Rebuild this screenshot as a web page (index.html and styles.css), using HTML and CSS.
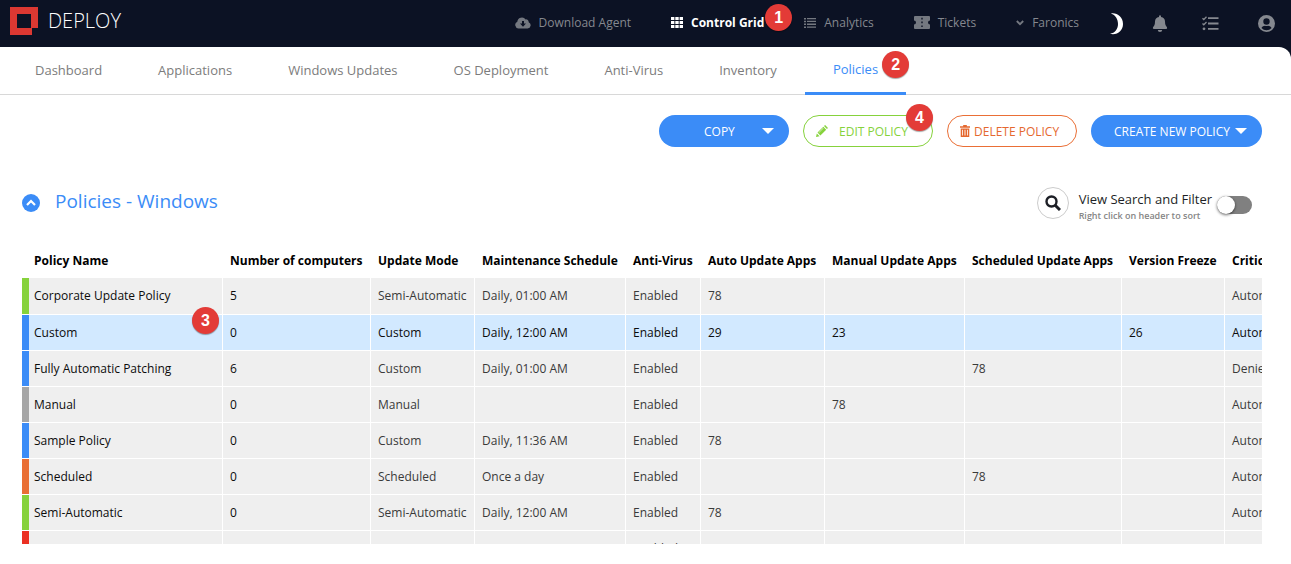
FILE: index.html
```html
<!DOCTYPE html>
<html lang="en">
<head>
<meta charset="utf-8">
<title>Deploy - Policies</title>
<link rel="stylesheet" href="styles.css">
</head>
<body>
<header class="masthead">
  <div class="topbar">
    <a class="brand" href="#">
      <svg class="brand-mark" width="28" height="28" viewBox="0 0 28 28" aria-hidden="true"><path fill="#dc3832" fill-rule="evenodd" d="M0 0H28V21H22V28H0ZM7 7V21H21V7Z"/></svg>
      <span>DEPLOY</span>
    </a>
    <nav class="topnav" aria-label="Main">
      <a class="toplink" href="#">
        <svg width="16" height="12" viewBox="0 0 16 12" aria-hidden="true"><path fill="currentColor" fill-rule="evenodd" d="M3.500 11.500A3.500 3.500 0 0 1 2.300 4.800A4.600 4.600 0 0 1 10.600 2.400A2.700 2.700 0 0 1 13.700 5.200A3.300 3.300 0 0 1 12.600 11.500ZM7 4V6.500H5L8 9.700L11 6.500H9V4Z"/></svg>
        <span>Download Agent</span>
      </a>
      <a class="toplink current" href="#">
        <svg width="12" height="11" viewBox="0 0 12 11" aria-hidden="true"><path fill="currentColor" d="M0 0h3.400v3H0zM4.300 0h3.400v3H4.300zM8.600 0H12v3H8.600zM0 4h3.400v3H0zM4.300 4h3.400v3H4.300zM8.600 4H12v3H8.600zM0 8h3.400v3H0zM4.300 8h3.400v3H4.300zM8.600 8H12v3H8.600z"/></svg>
        <span>Control Grid</span>
        <span class="badge badge-top">1</span>
      </a>
      <a class="toplink" href="#">
        <svg width="12" height="10" viewBox="0 0 12 10" aria-hidden="true"><path fill="currentColor" d="M0 0h2v1.500H0zM3 0h9v1.300H3zM0 2.800h2v1.500H0zM3 2.800h9v1.300H3zM0 5.600h2v1.500H0zM3 5.600h9v1.300H3zM0 8.400h2v1.500H0zM3 8.400h9v1.300H3z"/></svg>
        <span>Analytics</span>
      </a>
      <a class="toplink" href="#">
        <svg width="16" height="13" viewBox="0 0 16 13" aria-hidden="true"><path fill="currentColor" fill-rule="evenodd" d="M1 0H15Q16 0 16 1V4.500A2 2 0 0 0 16 8.500V12Q16 13 15 13H1Q0 13 0 12V8.500A2 2 0 0 0 0 4.500V1Q0 0 1 0ZM7.300 1.800V3.500H8.700V1.800ZM7.300 5.600V7.300H8.700V5.600ZM7.300 9.400V11.100H8.700V9.400Z"/></svg>
        <span>Tickets</span>
      </a>
      <a class="toplink" href="#">
        <svg width="8" height="6" viewBox="0 0 8 6" aria-hidden="true"><path fill="none" stroke="currentColor" stroke-width="1.800" d="M.8 1L4 4.200L7.200 1"/></svg>
        <span>Faronics</span>
      </a>
    </nav>
    <div class="tools">
      <button class="tool moon" type="button" aria-label="Dark mode"><svg width="13" height="22" viewBox="0 0 13 22"><path fill="#fff" d="M1 .5C7 -.5 13 4 13 11S7 22.500 0 20.800C5 20 8 16 8 11S5.500 2 1 .5Z"/></svg></button>
      <button class="tool" type="button" aria-label="Notifications"><svg width="16" height="17" viewBox="0 0 16 17"><path fill="currentColor" d="M7 1.300A1 1 0 0 1 9 1.300V2A4.800 4.800 0 0 1 13 6.600C13 10 14 11.200 15 12.200Q15.600 14 14.200 14H1.800Q.4 14 1 12.200C2 11.200 3 10 3 6.600A4.800 4.800 0 0 1 7 2ZM5.800 15H10.200A2.200 2 0 0 1 5.800 15Z"/></svg></button>
      <button class="tool tasks" type="button" aria-label="Tasks"><svg width="17" height="15" viewBox="0 0 17 15"><path fill="none" stroke="currentColor" stroke-width="1.800" d="M6 2.200H16.500M6 7.500H16.500M6 12.800H16.500"/><path fill="none" stroke="currentColor" stroke-width="1.300" d="M.5 2.200L1.800 3.500L4.500 .7M.5 7.500L1.800 8.800L4.500 6"/><circle cx="2" cy="12.800" r="1.400" fill="currentColor"/></svg></button>
      <button class="tool" type="button" aria-label="Account"><svg width="17" height="17" viewBox="0 0 17 17"><path fill="currentColor" fill-rule="evenodd" d="M8.500 0A8.500 8.500 0 1 1 8.500 17A8.500 8.500 0 1 1 8.500 0ZM8.500 3.300A3.200 3.200 0 1 0 8.500 9.700A3.200 3.200 0 1 0 8.500 3.300ZM3.500 13A6.500 6.500 0 0 0 13.500 13C12.800 11.500 11.300 10.700 10 10.700Q8.500 11.400 7 10.700C5.700 10.700 4.200 11.500 3.500 13Z"/></svg></button>
    </div>
  </div>
  <nav class="tabs" aria-label="Control grid">
    <a class="tab" href="#">Dashboard</a>
    <a class="tab" href="#">Applications</a>
    <a class="tab" href="#">Windows Updates</a>
    <a class="tab" href="#">OS Deployment</a>
    <a class="tab" href="#">Anti-Virus</a>
    <a class="tab" href="#">Inventory</a>
    <a class="tab active" href="#">Policies<span class="badge badge-tab">2</span></a>
  </nav>
</header>
<main class="content">
  <div class="actions">
    <button class="btn solid copy" type="button">COPY <svg class="caret" width="12" height="6" viewBox="0 0 12 6"><path fill="currentColor" d="M0 0H12L6 6Z"/></svg></button>
    <button class="btn edit" type="button">
      <svg width="12" height="12" viewBox="0 0 12 12"><path fill="currentColor" fill-rule="evenodd" d="M0 12L.8 8.400L3.600 11.200ZM1.500 7.600L7.300 1.800L10.200 4.700L4.400 10.500ZM8 1.100L9.100 0L12 2.900L10.900 4ZM3 7.800L7.500 3.300L7.100 2.900L2.600 7.400Z"/></svg>
      EDIT POLICY
      <span class="badge badge-edit">4</span>
    </button>
    <button class="btn delete" type="button">
      <svg width="10" height="12" viewBox="0 0 11 13"><path fill="currentColor" fill-rule="evenodd" d="M3.500 1.300V0H7.500V1.300H11V3H0V1.300ZM.8 3.700H10.200V13H.8ZM2.300 5V11.500H3.200V5ZM5 5V11.500H6V5ZM7.800 5V11.500H8.700V5Z"/></svg>
      DELETE POLICY
    </button>
    <button class="btn solid create" type="button">CREATE NEW POLICY <svg class="caret" width="12" height="6" viewBox="0 0 12 6"><path fill="currentColor" d="M0 0H12L6 6Z"/></svg></button>
  </div>
  <section class="policies">
    <div class="section-head">
      <button class="collapse" type="button" aria-label="Collapse section"><svg width="18" height="18" viewBox="0 0 18 18"><circle cx="9" cy="9" r="9" fill="#3b8cf7"/><path fill="none" stroke="#fff" stroke-width="2.200" d="M5 11L9 7L13 11"/></svg></button>
      <h1 class="title">Policies - Windows</h1>
      <div class="filter">
        <button class="search" type="button" aria-label="Search"><svg width="16" height="16" viewBox="0 0 16 16"><circle cx="6.500" cy="6.500" r="5" fill="none" stroke="#1d1f26" stroke-width="2.400"/><path stroke="#1d1f26" stroke-width="3" d="M10.200 10.200L15 15"/></svg></button>
        <label class="filter-label" for="view-filter">View Search and Filter<small>Right click on header to sort</small></label>
        <input class="switch" id="view-filter" type="checkbox">
      </div>
    </div>
    <div class="grid">
      <table class="table">
        <colgroup><col class="c-name"><col class="c-num"><col class="c-mode"><col class="c-maint"><col class="c-av"><col class="c-auto"><col class="c-man"><col class="c-sched"><col class="c-freeze"><col class="c-crit"></colgroup>
        <thead><tr><th>Policy Name</th><th>Number of computers</th><th>Update Mode</th><th>Maintenance Schedule</th><th>Anti-Virus</th><th>Auto Update Apps</th><th>Manual Update Apps</th><th>Scheduled Update Apps</th><th>Version Freeze</th><th>Critical Updates</th></tr></thead>
        <tbody>
          <tr class="green"><td>Corporate Update Policy</td><td>5</td><td>Semi-Automatic</td><td>Daily, 01:00 AM</td><td>Enabled</td><td>78</td><td></td><td></td><td></td><td>Automatic</td></tr>
          <tr class="blue selected"><td>Custom<span class="badge badge-row">3</span></td><td>0</td><td>Custom</td><td>Daily, 12:00 AM</td><td>Enabled</td><td>29</td><td>23</td><td></td><td>26</td><td>Automatic</td></tr>
          <tr class="blue"><td>Fully Automatic Patching</td><td>6</td><td>Custom</td><td>Daily, 01:00 AM</td><td>Enabled</td><td></td><td></td><td>78</td><td></td><td>Denied</td></tr>
          <tr class="gray"><td>Manual</td><td>0</td><td>Manual</td><td></td><td>Enabled</td><td></td><td>78</td><td></td><td></td><td>Automatic</td></tr>
          <tr class="blue"><td>Sample Policy</td><td>0</td><td>Custom</td><td>Daily, 11:36 AM</td><td>Enabled</td><td>78</td><td></td><td></td><td></td><td>Automatic</td></tr>
          <tr class="orange"><td>Scheduled</td><td>0</td><td>Scheduled</td><td>Once a day</td><td>Enabled</td><td></td><td></td><td>78</td><td></td><td>Automatic</td></tr>
          <tr class="green"><td>Semi-Automatic</td><td>0</td><td>Semi-Automatic</td><td>Daily, 12:00 AM</td><td>Enabled</td><td>78</td><td></td><td></td><td></td><td>Automatic</td></tr>
          <tr class="red"><td></td><td></td><td></td><td></td><td>Enabled</td><td></td><td></td><td></td><td></td><td></td></tr>
        </tbody>
      </table>
    </div>
  </section>
</main>
</body>
</html>
```
FILE: styles.css
```css
* { box-sizing: border-box; }

body {
  margin: 0;
  height: 100vh;
  display: flex;
  flex-direction: column;
  background: #fff;
  color: #1d1f26;
  font-family: "Open Sans", "Noto Sans", sans-serif;
  font-size: 12px;
}

a { color: inherit; text-decoration: none; }
button { font: inherit; border: 0; background: none; padding: 0; cursor: pointer; }
svg { display: block; flex: none; }

/* Header */
.masthead { background: #0c1224; }
.topbar { display: flex; align-items: center; height: 47px; padding: 0 16px 0 10px; }
.brand { display: flex; align-items: center; gap: 10px; color: #fff; font-size: 20px; font-weight: 300; line-height: 28px; padding-bottom: 6px; }
.topnav { display: flex; gap: 40px; margin-left: auto; padding-bottom: 2px; }
.toplink { position: relative; display: flex; align-items: center; gap: 8px; color: #85888f; line-height: 18px; white-space: nowrap; }
.toplink.current { color: #fff; font-weight: 700; }
.toplink svg { color: #747880; }
.toplink.current svg { color: #fff; }
.tools { display: flex; align-items: center; gap: 34px; margin-left: 31px; color: #85888f; }
.tool { color: inherit; }
.tool.moon { margin-right: -5px; }
.tool.tasks { margin-right: 5px; }

/* Tabs */
.tabs {
  display: flex;
  padding-left: 7px;
  background: #fff;
  border-bottom: 1px solid #d8d8d8;
  border-radius: 0 12px 0 0;
}
.tab { position: relative; padding: 0 28px; font-size: 13px; line-height: 47px; color: #7c7c7c; white-space: nowrap; }
.tab.active { color: #3b8cf7; border-bottom: 3px solid #3b8cf7; line-height: 45px; margin-bottom: -1px; }

/* Numbered markers */
.badge {
  position: absolute;
  width: 27px;
  height: 27px;
  border-radius: 50%;
  background: #e33b37;
  box-shadow: 0 1px 1px rgba(0, 0, 0, .35);
  color: #fff;
  font-family: "Liberation Sans", Arial, sans-serif;
  font-size: 16px;
  font-weight: 700;
  line-height: 28px;
  text-align: center;
}
.badge-top { left: 100%; bottom: 1px; margin-left: 1px; }
.badge-tab { right: -3px; top: 4px; }
.badge-edit { right: -1px; top: -12px; }
.badge-row { right: 3px; top: -8px; }

/* Toolbar */
.content { flex: 1; min-height: 0; display: flex; flex-direction: column; padding: 20px 29px 20px 22px; }
.actions { display: flex; justify-content: flex-end; gap: 14px; }
.btn {
  position: relative;
  display: flex;
  align-items: center;
  width: 130px;
  height: 32px;
  border-radius: 16px;
  white-space: nowrap;
}
.btn.solid { background: #3b8cf7; color: #fff; }
.copy { justify-content: space-between; padding: 0 15px 0 45px; }
.edit { gap: 11px; padding: 0 12px; border: 1px solid #86d23c; color: #86d23c; }
.delete { gap: 4px; padding: 0 12px; border: 1px solid #ea6f36; color: #e5682f; }
.create { justify-content: space-between; width: 171px; padding: 0 15px 0 23px; }

/* Policies section */
.policies { flex: 1; min-height: 0; display: flex; flex-direction: column; }
.section-head { display: flex; align-items: center; height: 97px; padding: 14px 10px 0 0; }
.title { margin: 0 auto 0 15px; padding-bottom: 4px; color: #3b8cf7; font-size: 19px; font-weight: 400; }
.filter { display: flex; align-items: center; gap: 5px; }
.search { display: grid; place-items: center; width: 32px; height: 32px; margin-right: 5px; border: 1px solid #ccc; border-radius: 50%; }
.filter-label { padding-top: 10px; font-size: 13px; line-height: 17px; }
.filter-label small { display: block; color: #858585; font-size: 9px; font-weight: 600; line-height: 16px; }
.switch { appearance: none; width: 35px; height: 18px; margin: 4px 0 0; padding: 0; border-radius: 9px; background: #808080; }
.switch::before { content: ""; display: block; width: 18px; height: 18px; border-radius: 50%; background: #fff; box-shadow: 0 1px 3px rgba(0, 0, 0, .6); }
.switch:checked { background: #3b8cf7; }
.switch:checked::before { margin-left: 17px; }

/* Policy table */
.grid { flex: 1; min-height: 0; overflow: auto; scrollbar-width: none; }
.table { width: 1343px; table-layout: fixed; border-collapse: separate; border-spacing: 0; }
.table th { height: 34px; padding: 0 0 2px 7px; color: #000; font-weight: 700; text-align: left; white-space: nowrap; }
.table td {
  position: relative;
  height: 36px;
  padding: 0 0 0 7px;
  border-right: 1px solid #fff;
  border-bottom: 1px solid #fff;
  background: #efefef;
  color: #3a3a3a;
  white-space: nowrap;
}
.table th:first-child, .table td:first-child { padding-left: 12px; }
.table td:nth-child(-n+2), .table .selected td { color: #0c0c0c; }
.table .selected td { background: #d2e9ff; }
.table tbody tr:first-child td { height: 37px; padding-bottom: 1px; }
.green td:first-child { box-shadow: inset 7px 0 #86d23c; }
.blue td:first-child { box-shadow: inset 7px 0 #3b8cf7; }
.gray td:first-child { box-shadow: inset 7px 0 #a6a6a6; }
.orange td:first-child { box-shadow: inset 7px 0 #e96f34; }
.red td:first-child { box-shadow: inset 7px 0 #eb3023; }
.c-name { width: 201px; }
.c-num { width: 148px; }
.c-mode { width: 104px; }
.c-maint { width: 151px; }
.c-av { width: 75px; }
.c-auto { width: 124px; }
.c-man { width: 140px; }
.c-sched { width: 157px; }
.c-freeze { width: 103px; }
.c-crit { width: 140px; }
```
